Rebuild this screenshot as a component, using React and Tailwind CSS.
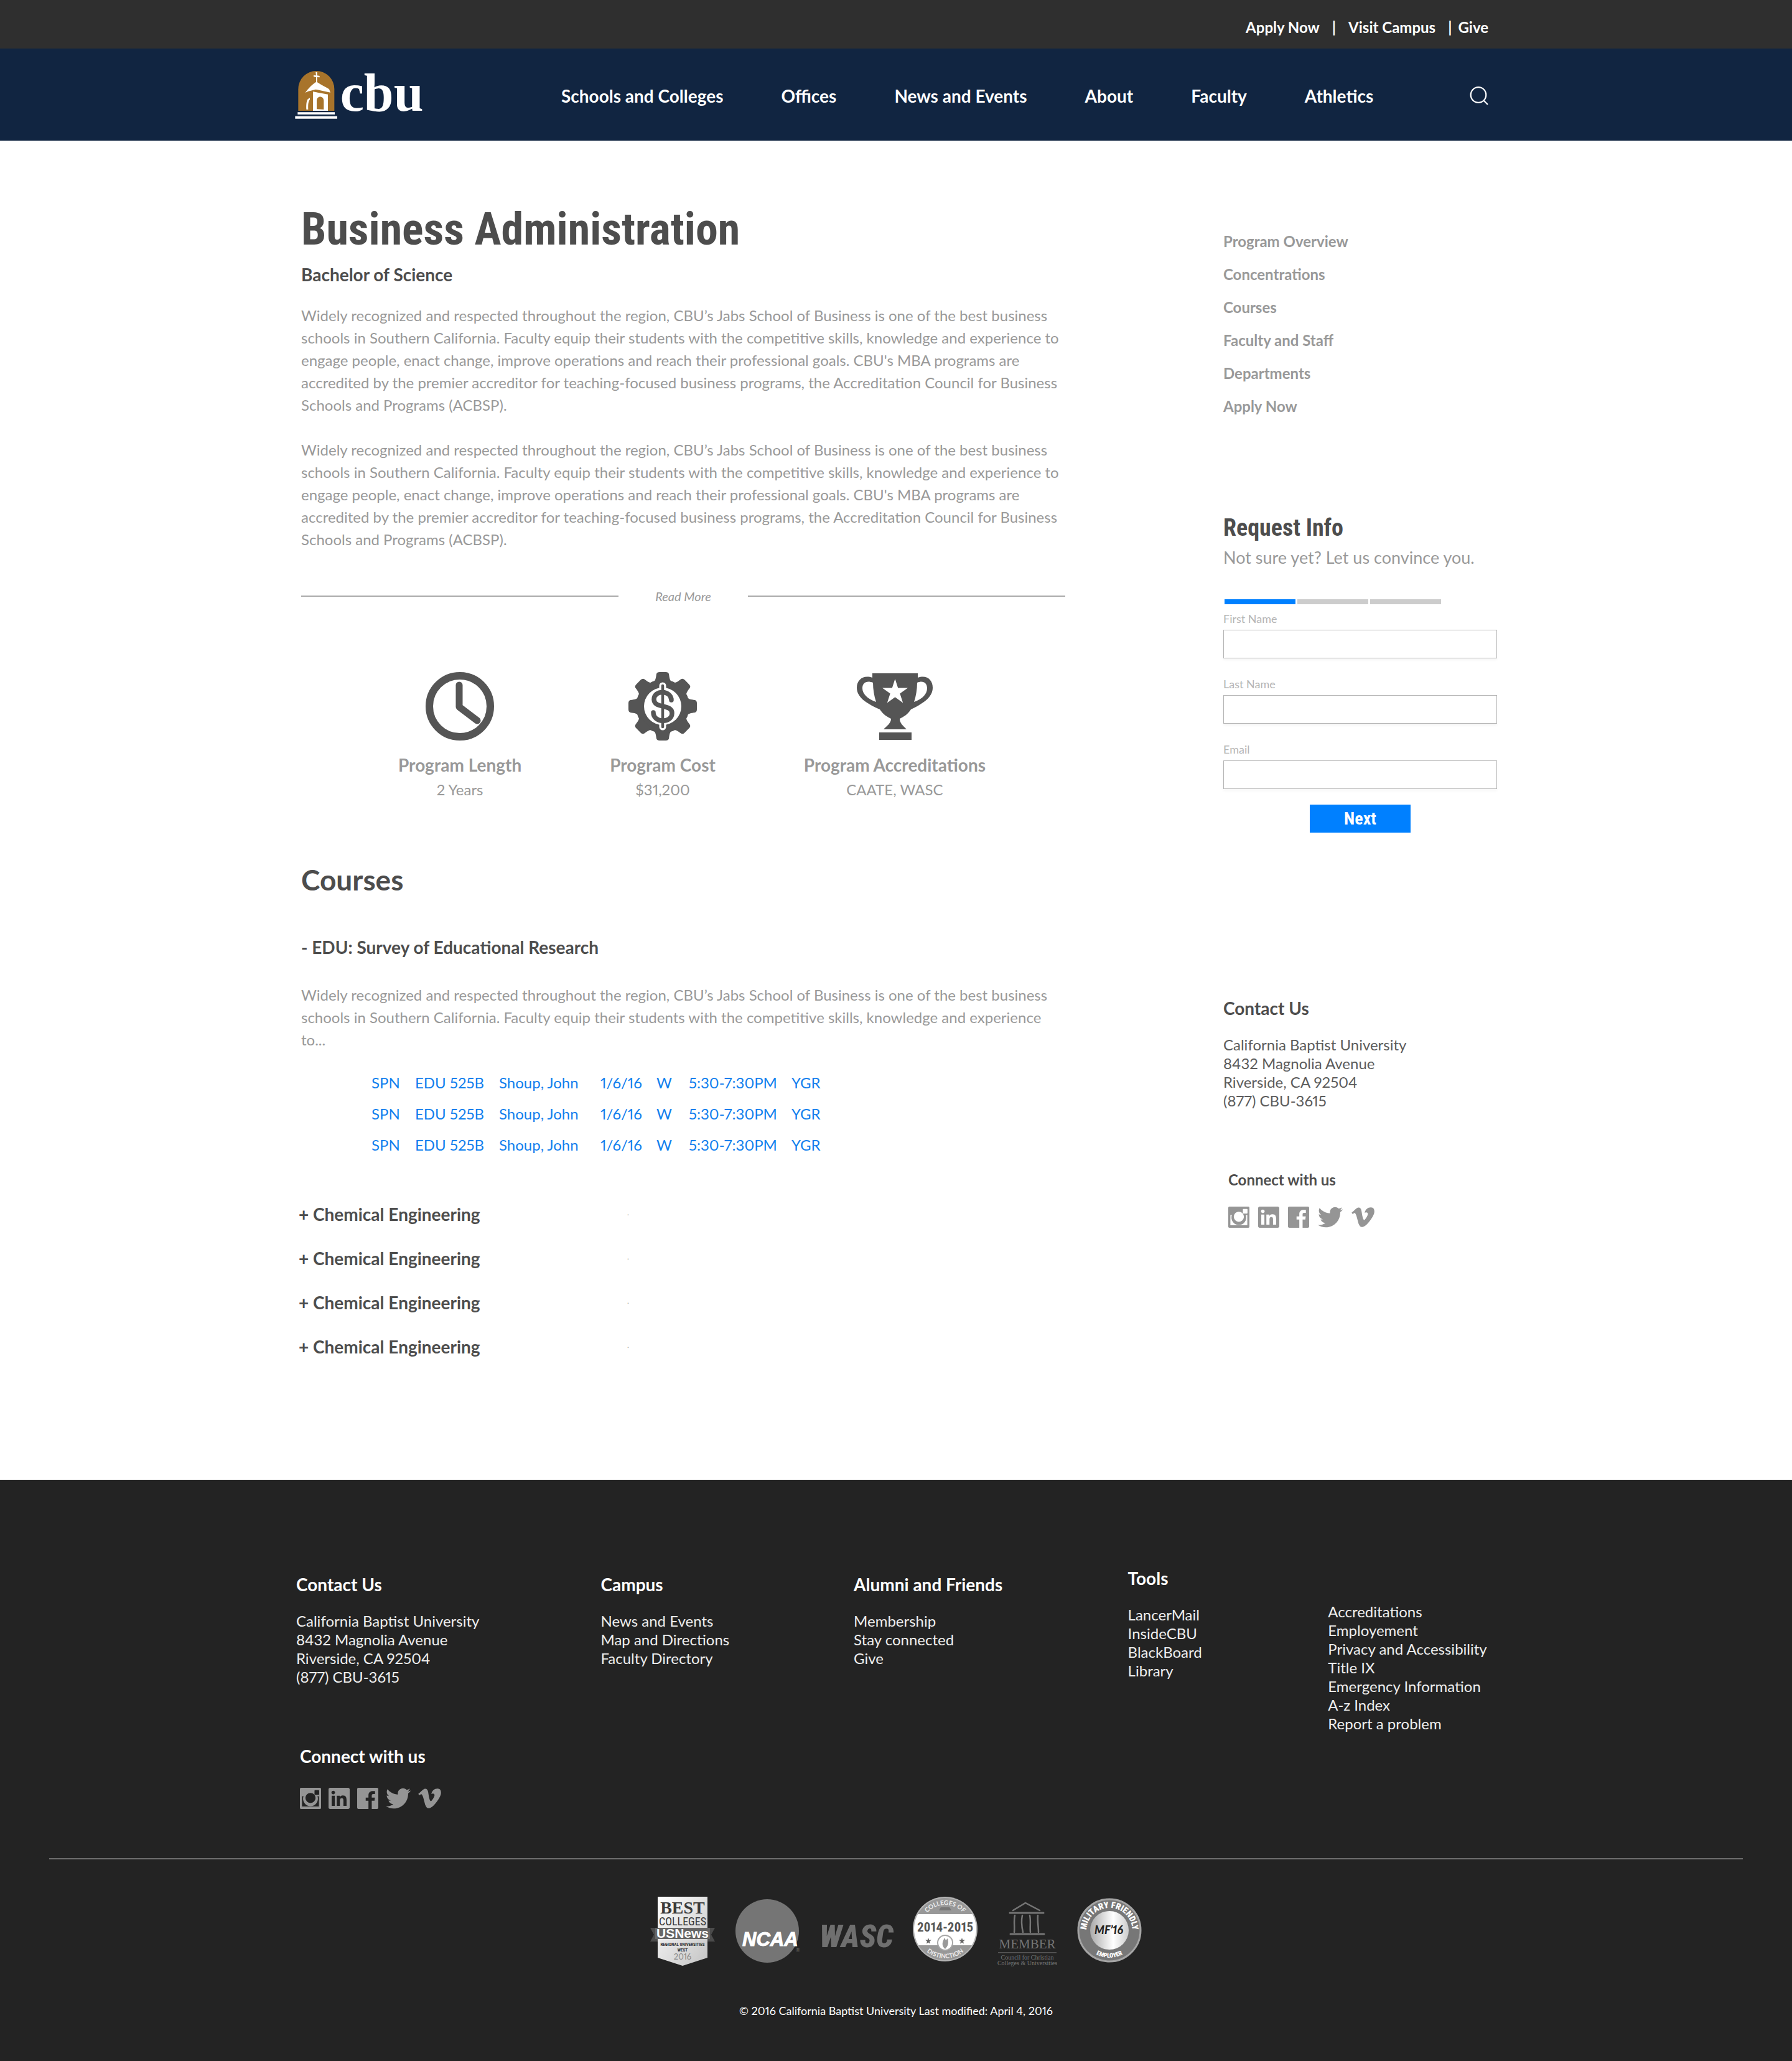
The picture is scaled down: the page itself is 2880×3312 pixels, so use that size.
import React from "react";

const intro =
  "Widely recognized and respected throughout the region, CBU’s Jabs School of Business is one of the best business schools in Southern California. Faculty equip their students with the competitive skills, knowledge and experience to engage people, enact change, improve operations and reach their professional goals. CBU's MBA programs are accredited by the premier accreditor for teaching-focused business programs, the Accreditation Council for Business Schools and Programs (ACBSP).";

const navItems = ["Schools and Colleges", "Offices", "News and Events", "About", "Faculty", "Athletics"];
const sideLinks = ["Program Overview", "Concentrations", "Courses", "Faculty and Staff", "Departments", "Apply Now"];
const address = ["California Baptist University", "8432 Magnolia Avenue", "Riverside, CA 92504", "(877) CBU-3615"];
const session = ["SPN", "EDU 525B", "Shoup, John", "1/6/16", "W", "5:30-7:30PM", "YGR"];

function Logo() {
  return (
    <svg viewBox="42 36 645 240" className="h-[80px] w-[215px] overflow-visible" role="img" aria-label="cbu">
      <path d="M58 234V130a87 88 0 0 1 174 0v104z" fill="#a8742b" />
      <g fill="#fff">
        <path d="M142 48h7v16l12 2v7l-12-1v24c10 8 40 22 58 34l6 16-70-15-37 9-14 7c8-14 28-36 52-52V72l-12-2v-7l12 1z" />
        <path fillRule="evenodd" d="M129 142l72 13v79h-72zM147 226l34 2v-42c0-26-34-26-34 0z" />
        <path d="M104 178l10-6v8c-8 10-9 24-8 48h-9c-1-20 0-40 7-50z" />
        <path d="M55 241h179v11H55zM43 260h203v12H43z" />
      </g>
      <text x="260" y="234" fill="#fff" fontSize="258" fontWeight="700" fontFamily="Liberation Serif, serif">
        cbu
      </text>
    </svg>
  );
}

function Clock() {
  return (
    <svg viewBox="0 0 110 110" className="size-[110px]" fill="none" stroke="#555" aria-hidden="true">
      <circle cx="55" cy="55" r="49" strokeWidth="12" />
      <path d="M54 21v35l29 22" strokeWidth="11" strokeLinecap="round" strokeLinejoin="round" />
    </svg>
  );
}

function GearDollar() {
  return (
    <svg viewBox="0 0 110 110" className="size-[110px]" aria-hidden="true">
      <g fill="#555">
        <circle cx="55" cy="55" r="43" />
        {[0, 45, 90, 135, 180, 225, 270, 315].map((a) => (
          <path key={a} transform={`rotate(${a} 55 55)`} d="M45 3q1-3 5-3h10q4 0 5 3c1 6 1 12 7 14L38 17c6-2 6-8 7-14z" />
        ))}
      </g>
      <circle cx="55" cy="55" r="30" fill="#fff" />
      <path d="M55 22v66" stroke="#fff" strokeWidth="11" strokeLinecap="round" />
      <path
        d="M69 45c0-16-28-17-28-1 0 15 29 7 29 22 0 17-30 16-30-1"
        fill="none" stroke="#555" strokeWidth="7.5" strokeLinecap="round"
      />
      <path d="M55 22v66" stroke="#555" strokeWidth="4.5" strokeLinecap="round" />
    </svg>
  );
}

function Trophy() {
  return (
    <svg viewBox="0 0 122 110" className="h-[110px] w-[122px]" aria-hidden="true">
      <g fill="#555">
        <path
          fillRule="evenodd"
          d="M25 2h73v7c14-5 24 3 24 16 0 14-12 24-35 35-5 8-12 12-18 15 0 7 5 11 11 17H43c6-6 12-10 12-17-6-3-13-7-18-15C12 49 0 39 0 25 0 12 11 4 25 9zM26 17c-10-4-17 0-17 9 0 9 8 17 22 22-3-9-5-20-5-31zM97 17c0 11-2 22-5 31 14-5 21-13 21-22s-7-13-16-9z"
        />
        <path d="M36 97h52v12H36z" />
      </g>
      <path fill="#fff" d="M61.500 11l4.700 14.500H82L69.300 34.500l4.900 15-12.700-9.200-12.700 9.200 4.900-15L41 25.500h15.800z" />
    </svg>
  );
}

function SocialIcons({ className }) {
  return (
    <div className={`flex items-center text-[#959595] ${className}`}>
      <a href="#instagram" aria-label="Instagram">
        <svg viewBox="0 0 100 100" className="size-[34px]" fill="currentColor">
          <path
            fillRule="evenodd"
            d="M5 0H95Q100 0 100 5V95Q100 100 95 100H5Q0 100 0 95V5Q0 0 5 0ZM10 40V88H90V40H83A35 35 0 1 1 17 40ZM50 24A24 24 0 1 0 50 72A24 24 0 1 0 50 24ZM72 11H88Q91 11 91 14V30Q91 33 88 33H72Q69 33 69 30V14Q69 11 72 11Z"
          />
        </svg>
      </a>
      <a href="#linkedin" aria-label="LinkedIn">
        <svg viewBox="0 0 24 24" className="size-[34px]" fill="currentColor">
          <path d="M20.447 20.452h-3.554v-5.569c0-1.328-.027-3.037-1.852-3.037-1.853 0-2.136 1.445-2.136 2.939v5.667H9.351V9h3.414v1.561h.046c.477-.9 1.637-1.850 3.370-1.850 3.601 0 4.267 2.370 4.267 5.455v6.286zM5.337 7.433c-1.144 0-2.063-.926-2.063-2.065 0-1.138.92-2.063 2.063-2.063 1.140 0 2.064.925 2.064 2.063 0 1.139-.925 2.065-2.064 2.065zm1.782 13.019H3.555V9h3.564v11.452zM22.225 0H1.771C.792 0 0 .774 0 1.729v20.542C0 23.227.792 24 1.771 24h20.451C23.200 24 24 23.227 24 22.271V1.729C24 .774 23.200 0 22.222 0h.003z" />
        </svg>
      </a>
      <a href="#facebook" aria-label="Facebook">
        <svg viewBox="0 0 24 24" className="size-[34px]" fill="currentColor">
          <path d="M22.676 0H1.324C.593 0 0 .593 0 1.324v21.352C0 23.408.593 24 1.324 24h11.494v-9.294H9.689v-3.621h3.129V8.410c0-3.099 1.894-4.785 4.659-4.785 1.325 0 2.464.097 2.796.141v3.240h-1.921c-1.500 0-1.792.721-1.792 1.771v2.311h3.584l-.465 3.630H16.560V24h6.115c.733 0 1.325-.592 1.325-1.324V1.324C24 .593 23.408 0 22.676 0" />
        </svg>
      </a>
      <a href="#twitter" aria-label="Twitter">
        <svg viewBox="0 2 24 20" className="h-[34px] w-[40px]" fill="currentColor">
          <path d="M23.954 4.569c-.885.389-1.830.654-2.825.775 1.014-.611 1.794-1.574 2.163-2.723-.951.555-2.005.959-3.127 1.184-.896-.959-2.173-1.559-3.591-1.559-2.717 0-4.920 2.203-4.920 4.917 0 .39.045.765.127 1.124C7.691 8.094 4.066 6.130 1.640 3.161c-.427.722-.666 1.561-.666 2.475 0 1.710.87 3.213 2.188 4.096-.807-.026-1.566-.248-2.228-.616v.061c0 2.385 1.693 4.374 3.946 4.827-.413.111-.849.171-1.296.171-.314 0-.615-.03-.916-.086.631 1.953 2.445 3.377 4.604 3.417-1.680 1.319-3.809 2.105-6.102 2.105-.39 0-.779-.023-1.170-.067 2.189 1.394 4.768 2.209 7.557 2.209 9.054 0 13.999-7.496 13.999-13.986 0-.209 0-.42-.015-.63.961-.689 1.800-1.560 2.460-2.548l-.047-.02z" />
        </svg>
      </a>
      <a href="#vimeo" aria-label="Vimeo">
        <svg viewBox="0 1.500 24 21" className="h-[32px] w-[37px]" fill="currentColor">
          <path d="M23.977 6.416c-.105 2.338-1.739 5.543-4.894 9.609-3.268 4.247-6.026 6.370-8.290 6.370-1.409 0-2.578-1.294-3.553-3.881L5.322 11.400C4.603 8.816 3.834 7.522 3.010 7.522c-.179 0-.806.378-1.881 1.132L0 7.197c1.185-1.044 2.351-2.084 3.501-3.128C5.080 2.701 6.266 1.984 7.055 1.910c1.867-.18 3.016 1.100 3.447 3.838.465 2.953.789 4.789.971 5.507.539 2.450 1.131 3.674 1.776 3.674.502 0 1.256-.796 2.265-2.385 1.004-1.589 1.540-2.797 1.612-3.628.144-1.371-.395-2.061-1.614-2.061-.574 0-1.167.121-1.777.391 1.186-3.868 3.434-5.757 6.762-5.637 2.473.06 3.628 1.664 3.493 4.797l-.013.01z" />
        </svg>
      </a>
    </div>
  );
}

const narrow = "Roboto Condensed, Liberation Sans Narrow, Liberation Sans, sans-serif";
const star = "M0-5l1.200 3.400H5L2 .8 3 4.500 0 2.400-3 4.500-2 .8-5-1.600h3.800z";

function BestColleges() {
  return (
    <svg viewBox="0 -2 104 114" className="h-[114px] w-[104px]" textAnchor="middle" role="img" aria-label="Best Colleges, U.S. News">
      <defs>
        <linearGradient id="shield" x1="0" y1="0" x2="1" y2="1">
          <stop offset="0" stopColor="#fff" />
          <stop offset="1" stopColor="#c4c4c4" />
        </linearGradient>
      </defs>
      <path d="M0 50h104l-6 11 6 11H0l6-11z" fill="#4b4b4b" />
      <path d="M12 0h80v98l-40 13-40-13z" fill="url(#shield)" />
      <path d="M8 50h88v18H8z" fill="#666" />
      <text x="52" y="27" fontSize="28" fontWeight="700" fontFamily="Liberation Serif, serif" fill="#3a3a3a">BEST</text>
      <text x="52" y="46" fontSize="18" fontFamily={narrow} fill="#3a3a3a">COLLEGES</text>
      <text x="52" y="66" fontSize="21" fontWeight="700" fontFamily="Liberation Sans" fill="#fff">USNews</text>
      <text x="52" y="79" fontSize="7" fontWeight="700" fontFamily={narrow} fill="#333">REGIONAL UNIVERSITIES</text>
      <text x="52" y="88" fontSize="7" fontWeight="700" fontFamily={narrow} fill="#333">WEST</text>
      <text x="52" y="101" fontSize="13" fontFamily="Lato" fill="#888">2016</text>
    </svg>
  );
}

function Ncaa() {
  return (
    <svg viewBox="0 0 104 104" className="size-[104px] overflow-visible" role="img" aria-label="NCAA">
      <circle cx="52" cy="52" r="51" fill="#757575" />
      <text x="12" y="76" fontSize="31" fontWeight="700" fontStyle="italic" fontFamily="Liberation Sans" fill="#fff" stroke="#fff" strokeWidth="1">NCAA</text>
      <text x="98" y="86" fontSize="9" fontFamily="Liberation Sans" fill="#757575">®</text>
    </svg>
  );
}

function Wasc() {
  return (
    <svg viewBox="0 0 118 54" className="h-[54px] w-[118px] overflow-visible" role="img" aria-label="WASC">
      <text x="0" y="53" fontSize="50" fontWeight="900" fontStyle="italic" fontFamily={narrow} fill="#6f6f6f">WASC</text>
    </svg>
  );
}

function Distinction() {
  return (
    <svg viewBox="0 0 104 112" className="h-[112px] w-[104px]" textAnchor="middle" role="img" aria-label="Colleges of Distinction 2014-2015">
      <defs>
        <clipPath id="disc"><circle cx="52" cy="53" r="50" /></clipPath>
        <path id="topArc" d="M13 53a39 39 0 0 1 78 0" />
        <path id="lowArc" d="M5 53a47 47 0 0 0 94 0" />
      </defs>
      <circle cx="52" cy="53" r="52" fill="#b5b5b5" />
      <g clipPath="url(#disc)">
        <path d="M0 0h104v106H0z" fill="#989898" />
        <path d="M0 29h104v50H0z" fill="#fff" />
      </g>
      <path d="M42 23l3-5h14l3 5z" fill="#777" />
      <text fontSize="10" fontWeight="700" fontFamily="Lato" fill="#eee">
        <textPath href="#topArc" startOffset="50%">COLLEGES OF</textPath>
      </text>
      <text fontSize="10" fontWeight="700" fontFamily="Lato" fill="#eee">
        <textPath href="#lowArc" startOffset="50%">DISTINCTION</textPath>
      </text>
      <text x="52" y="57" fontSize="21" fontWeight="700" fontFamily={narrow} fill="#555">2014-2015</text>
      <path d={star} transform="translate(25 72)" fill="#666" />
      <path d={star} transform="translate(79 72)" fill="#666" />
      <circle cx="52" cy="75" r="12" fill="#fff" stroke="#a5a5a5" strokeWidth="2" />
      <path d="M52 85c-7-6-4-12-1-18l2 4 3-3c2 7 1 12-4 17z" fill="#999" />
    </svg>
  );
}

function Member() {
  return (
    <svg viewBox="0 -12 96 118" className="h-[118px] w-[96px]" textAnchor="middle" fill="#757575" role="img" aria-label="Member, Council for Christian Colleges and Universities">
      <g fill="none" stroke="#757575" strokeLinecap="round">
        <path d="M25 14L45 2l23 12" strokeWidth="2.500" />
        <path d="M20 18h54M21 52h54" strokeWidth="3" />
        <path d="M28 22c-2 9 0 18-1 27M40 22c-2 9-1 18 1 27M52 22c2 9 0 18 1 27M65 22c-1 9 1 18 1 27" strokeWidth="2.500" />
      </g>
      <text x="48" y="75" fontSize="21" fontFamily="Liberation Serif, serif">MEMBER</text>
      <path d="M1 81h94v1.500H1z" fill="#555" />
      <text x="48" y="93" fontSize="10" fontFamily="Liberation Serif, serif">Council for Christian</text>
      <text x="48" y="102" fontSize="10" fontFamily="Liberation Serif, serif">Colleges &amp; Universities</text>
    </svg>
  );
}

function Military() {
  return (
    <svg viewBox="0 0 104 106" className="h-[106px] w-[104px]" textAnchor="middle" role="img" aria-label="Military Friendly Employer 2016">
      <defs>
        <linearGradient id="metal" x1="0" y1="0" x2="1" y2="0">
          <stop offset="0" stopColor="#aaa" />
          <stop offset="0.600" stopColor="#fff" />
          <stop offset="1" stopColor="#ccc" />
        </linearGradient>
        <path id="ringTop" d="M16.700 64a37 37 0 1 1 70.600 0" />
        <path id="ringLow" d="M8 52a44 44 0 0 0 88 0" />
      </defs>
      <circle cx="52" cy="52" r="50" fill="#777" stroke="#a5a5a5" strokeWidth="3" />
      <circle cx="52" cy="52" r="31" fill="url(#metal)" />
      <text fontSize="14" fontWeight="900" fontFamily={narrow} fill="#fff">
        <textPath href="#ringTop" startOffset="50%">MILITARY FRIENDLY</textPath>
      </text>
      <text fontSize="10" fontWeight="900" fontFamily={narrow} fill="#fff">
        <textPath href="#ringLow" startOffset="50%">EMPLOYER</textPath>
      </text>
      <text x="51" y="58" fontSize="18" fontWeight="900" fontStyle="italic" fontFamily="Lato" fill="#222">MF’16</text>
    </svg>
  );
}

function Stat({ icon, title, value }) {
  return (
    <div className="flex flex-col items-center text-[#999]">
      {icon}
      <h3 className="mt-[23px] text-[28px] leading-8 font-bold">{title}</h3>
      <p className="mt-2 text-[24px] leading-8">{value}</p>
    </div>
  );
}

function Field({ id, label, type = "text" }) {
  return (
    <div className="flex flex-col gap-2">
      <label htmlFor={id} className="text-[18px] leading-5 text-[#b5b5b5]">{label}</label>
      <input id={id} type={type} className="h-[46px] w-full border border-[#b5b5b5] bg-white px-3 text-[22px] shadow-[0_3px_4px_#0000000a]" />
    </div>
  );
}

function FooterList({ title, items, className }) {
  return (
    <div className={className}>
      {title && <h2 className="mb-7 text-[28px] leading-8 font-bold text-white">{title}</h2>}
      <ul>
        {items.map((t) => (
          <li key={t}><a href="#footer">{t}</a></li>
        ))}
      </ul>
    </div>
  );
}

export default function App() {
  return (
    <div className="flex min-h-screen flex-col bg-white font-['Lato','Liberation_Sans',sans-serif] text-[24px] text-[#999] proportional-nums">
      <div className="bg-[#2f2f2f]">
        <div className="mx-auto flex h-[78px] max-w-[1932px] items-center justify-end gap-5 pt-[10px] pr-[14px] font-bold text-white">
          <a href="#apply">Apply Now</a>
          <span>|</span>
          <a href="#visit">Visit Campus</a>
          <div className="flex gap-2.5">
            <span>|</span>
            <a href="#give">Give</a>
          </div>
        </div>
      </div>

      <header className="bg-[#112541]">
        <div className="mx-auto flex h-[148px] max-w-[1932px] items-center pr-[14px]">
          <a href="#home" className="mr-[213px]"><Logo /></a>
          <nav className="flex gap-[93px] pt-1 text-[28px] leading-8 font-bold text-white">
            {navItems.map((n) => (
              <a key={n} href="#nav">{n}</a>
            ))}
          </nav>
          <button type="button" aria-label="Search" className="ml-auto pt-1 text-white">
            <svg viewBox="0 0 30 30" className="size-[30px]" fill="none" stroke="currentColor" strokeWidth="2.200">
              <circle cx="14" cy="13.500" r="12.300" />
              <path d="M22.500 22.500L29 29" />
            </svg>
          </button>
        </div>
      </header>

      <main className="mx-auto flex w-full max-w-[1932px] justify-between pb-[178px] pl-[10px]">
        <div className="w-full max-w-[1228px] pt-[103px]">
          <h1 className="font-['Roboto_Condensed','Liberation_Sans_Narrow','Liberation_Sans',sans-serif] text-[72px] leading-[80px] font-bold text-[#4d4d4d]">
            Business Administration
          </h1>
          <h2 className="mt-4 text-[28px] leading-8 font-bold text-[#4d4d4d]">Bachelor of Science</h2>
          <p className="mt-8 leading-9">{intro}</p>
          <p className="mt-9 leading-9">{intro}</p>

          <div className="mt-[61px] flex items-center justify-between">
            <span className="h-[2px] w-[510px] bg-[#aaa]" />
            <a href="#more" className="text-[20px] leading-6 italic">Read More</a>
            <span className="h-[2px] w-[510px] bg-[#aaa]" />
          </div>

          <section className="mt-[110px] flex gap-[142px] pl-[156px]">
            <Stat icon={<Clock />} title="Program Length" value="2 Years" />
            <Stat icon={<GearDollar />} title="Program Cost" value="$31,200" />
            <Stat icon={<Trophy />} title="Program Accreditations" value="CAATE, WASC" />
          </section>

          <h2 className="mt-[103px] text-[46px] leading-[52px] font-bold text-[#4d4d4d]">Courses</h2>
          <button type="button" aria-expanded="true" className="mt-[66px] block text-[28px] leading-8 font-bold text-[#4d4d4d]">
            - EDU: Survey of Educational Research
          </button>
          <p className="mt-[43px] leading-9">
            Widely recognized and respected throughout the region, CBU’s Jabs School of Business is one of the best business
            schools in Southern California. Faculty equip their students with the competitive skills, knowledge and experience to...
          </p>
          <table className="mt-[26px] ml-[113px] table-fixed text-left text-[#1280ee]">
            <colgroup>
              <col className="w-[70px]" />
              <col className="w-[135px]" />
              <col className="w-[163px]" />
              <col className="w-[90px]" />
              <col className="w-[52px]" />
              <col className="w-[165px]" />
              <col className="w-[60px]" />
            </colgroup>
            <tbody>
              {[0, 1, 2].map((r) => (
                <tr key={r}>
                  {session.map((c) => (
                    <td key={c} className="p-0 leading-[50px] whitespace-nowrap"><a href="#session">{c}</a></td>
                  ))}
                </tr>
              ))}
            </tbody>
          </table>

          <ul className="mt-[51px] -ml-1">
            {[0, 1, 2, 3].map((r) => (
              <li key={r} className="flex items-start">
                <button type="button" aria-expanded="false" className="w-[528px] text-left text-[28px] leading-[71px] font-bold text-[#4d4d4d]">
                  + Chemical Engineering
                </button>
                <span className="text-[12px] leading-[66px]">.</span>
              </li>
            ))}
          </ul>
        </div>

        <aside className="w-[440px] shrink-0 pt-[135px]">
          <ul className="leading-[53px] font-bold">
            {sideLinks.map((l) => (
              <li key={l}><a href="#section">{l}</a></li>
            ))}
          </ul>

          <form className="mt-[149px]">
            <h2 className="font-['Roboto_Condensed','Liberation_Sans_Narrow','Liberation_Sans',sans-serif] text-[38px] leading-10 font-bold text-[#4d4d4d]">
              Request Info
            </h2>
            <p className="mt-3 text-[27px] leading-8">Not sure yet? Let us convince you.</p>
            <div className="mt-[51px] flex gap-[3px] pl-0.5">
              <span className="h-2 w-[114px] bg-[#0080ff]" />
              <span className="h-2 w-[114px] bg-[#ccc]" />
              <span className="h-2 w-[114px] bg-[#ccc]" />
            </div>
            <div className="mt-[13px] flex flex-col gap-[31px]">
              <Field id="first-name" label="First Name" />
              <Field id="last-name" label="Last Name" />
              <Field id="email" label="Email" type="email" />
            </div>
            <button
              type="button"
              className="mx-auto mt-[25px] block h-[45px] w-[162px] bg-[#0080ff] font-['Roboto_Condensed','Liberation_Sans_Narrow','Liberation_Sans',sans-serif] text-[28px] leading-[45px] font-bold text-white"
            >
              Next
            </button>
          </form>

          <section className="mt-[266px]">
            <h2 className="text-[28px] leading-8 font-bold text-[#4d4d4d]">Contact Us</h2>
            <address className="mt-7 leading-[30px] text-[#5c5c5c] not-italic">
              {address.map((l) => <div key={l}>{l}</div>)}
            </address>
          </section>
          <section className="mt-24 pl-2">
            <h2 className="mb-[27px] leading-8 font-bold text-[#4d4d4d]">Connect with us</h2>
            <SocialIcons className="gap-3.5" />
          </section>
        </aside>
      </main>

      <footer className="grow bg-[#232323] pt-[142px] pb-[66px] text-white">
        <div className="mx-auto grid max-w-[1932px] grid-cols-[490fr_407fr_441fr_322fr_272fr] items-start pl-0.5 leading-[30px] text-[#eee]">
          <div className="pt-2.5">
            <h2 className="text-[28px] leading-8 font-bold text-white">Contact Us</h2>
            <address className="mt-7 not-italic">
              {address.map((l) => <div key={l}>{l}</div>)}
            </address>
            <div className="mt-24 pl-1.5">
              <h2 className="mb-[35px] text-[28px] leading-8 font-bold text-white">Connect with us</h2>
              <SocialIcons className="gap-3" />
            </div>
          </div>
          <FooterList className="pt-2.5" title="Campus" items={["News and Events", "Map and Directions", "Faculty Directory"]} />
          <FooterList className="pt-2.5" title="Alumni and Friends" items={["Membership", "Stay connected", "Give"]} />
          <FooterList title="Tools" items={["LancerMail", "InsideCBU", "BlackBoard", "Library"]} />
          <FooterList
            className="pt-[55px]"
            items={["Accreditations", "Employement", "Privacy and Accessibility", "Title IX", "Emergency Information", "A-z Index", "Report a problem"]}
          />
        </div>
        <hr className="mx-[79px] mt-[79px] border-t-2 border-[#6e6e6e]" />
        <div className="mt-[56px] flex items-center justify-center gap-8">
          <BestColleges />
          <Ncaa />
          <Wasc />
          <Distinction />
          <Member />
          <Military />
        </div>
        <p className="mt-[57px] text-center text-[18px] leading-6">
          © 2016 California Baptist University Last modified: April 4, 2016
        </p>
      </footer>
    </div>
  );
}
